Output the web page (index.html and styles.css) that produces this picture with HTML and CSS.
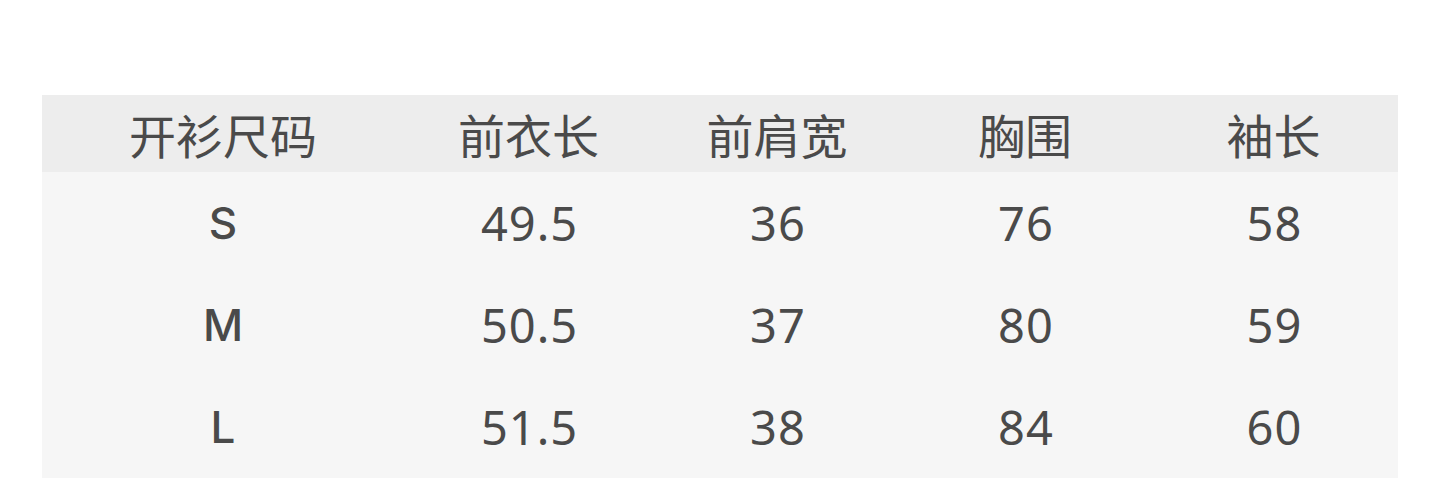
FILE: index.html
```html
<!DOCTYPE html>
<html lang="zh">
<head>
<meta charset="utf-8">
<link rel="stylesheet" href="styles.css">
</head>
<body>
<div class="page">
  <div class="table">
    <div class="row head">
      <div class="cell">开衫尺码</div>
      <div class="cell">前衣长</div>
      <div class="cell">前肩宽</div>
      <div class="cell">胸围</div>
      <div class="cell">袖长</div>
    </div>
    <div class="row">
      <div class="cell size">S</div>
      <div class="cell">49.5</div>
      <div class="cell">36</div>
      <div class="cell">76</div>
      <div class="cell">58</div>
    </div>
    <div class="row">
      <div class="cell size">M</div>
      <div class="cell">50.5</div>
      <div class="cell">37</div>
      <div class="cell">80</div>
      <div class="cell">59</div>
    </div>
    <div class="row">
      <div class="cell size">L</div>
      <div class="cell">51.5</div>
      <div class="cell">38</div>
      <div class="cell">84</div>
      <div class="cell">60</div>
    </div>
  </div>
</div>
</body>
</html>
```
FILE: styles.css
```css
html, body {
  margin: 0;
  padding: 0;
  background: #ffffff;
}
.page {
  width: 1440px;
  height: 478px;
  overflow: hidden;
  padding: 95px 42px 0 42px;
  box-sizing: border-box;
}
.table {
  width: 1356px;
  background: #f6f6f6;
  font-family: "Noto Sans", "Noto Sans CJK SC", sans-serif;
  color: #4a4a4a;
  font-size: 47px;
}
.row {
  display: grid;
  grid-template-columns: 362px 249px 248px 248px 249px;
  height: 102px;
  align-items: center;
}
.row.head {
  height: 77px;
  background: #ededed;
}
.head .cell {
  font-family: "Noto Sans CJK SC", sans-serif;
  font-size: 47px;
  letter-spacing: 0;
  padding-left: 0;
}
.cell {
  text-align: center;
  line-height: 1;
  letter-spacing: 1px;
  padding-left: 2px;
}
.size {
  font-family: "Inter", "Open Sans", sans-serif;
  font-weight: 500;
  font-size: 44px;
  letter-spacing: 0;
  padding-left: 0;
}
```
